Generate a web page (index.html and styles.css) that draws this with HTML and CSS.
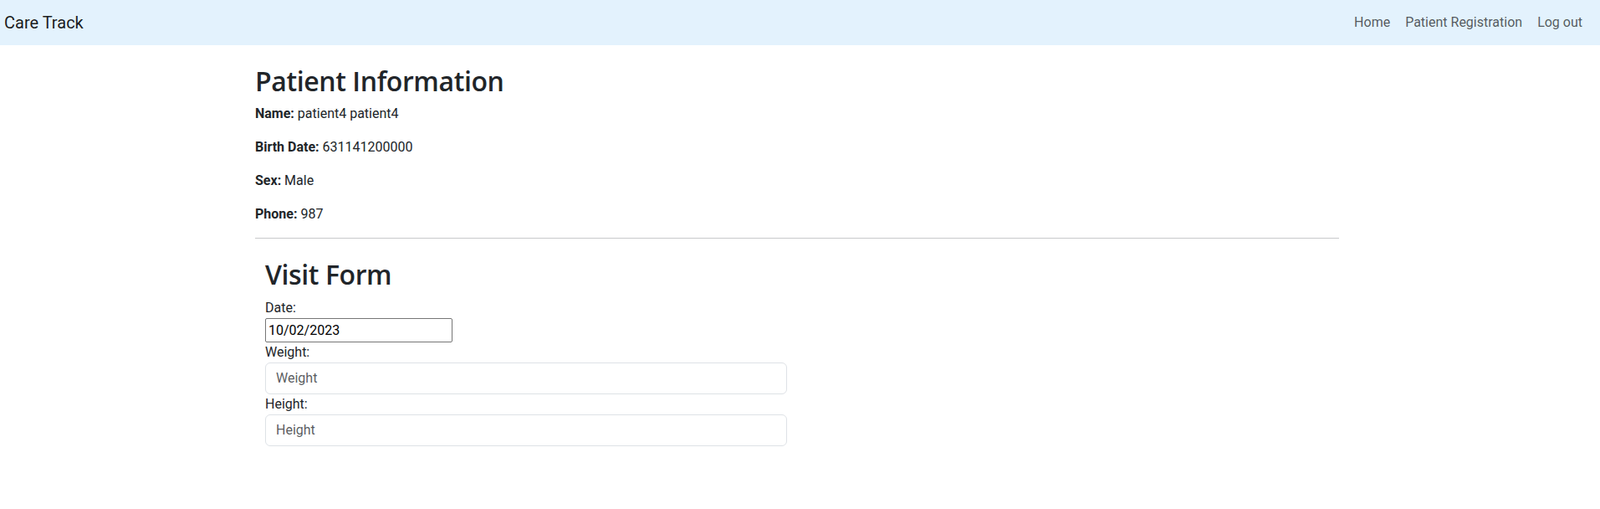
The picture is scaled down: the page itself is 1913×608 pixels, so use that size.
FILE: index.html
```html
<!DOCTYPE html>
<html lang="en">
<head>
<meta charset="utf-8">
<title>Care Track</title>
<link rel="stylesheet" href="styles.css">
</head>
<body>
<nav class="navbar">
  <a class="brand" href="#">Care Track</a>
  <div class="nav-links">
    <a class="nav-link" href="#">Home</a>
    <a class="nav-link" href="#">Patient Registration</a>
    <a class="nav-link" href="#">Log out</a>
  </div>
</nav>
<main class="container">
  <h2 class="heading">Patient Information</h2>
  <p class="info"><strong>Name:</strong> patient4 patient4</p>
  <p class="info"><strong>Birth Date:</strong> 631141200000</p>
  <p class="info"><strong>Sex:</strong> Male</p>
  <p class="info"><strong>Phone:</strong> 987</p>
  <hr class="divider">
  <section class="visit">
    <h2 class="heading">Visit Form</h2>
    <form class="visit-form">
      <label class="field-label" for="date">Date:</label>
      <input class="date-input" id="date" type="text" value="10/02/2023">
      <label class="field-label" for="weight">Weight:</label>
      <input class="form-control" id="weight" type="text" placeholder="Weight">
      <label class="field-label" for="height">Height:</label>
      <input class="form-control" id="height" type="text" placeholder="Height">
    </form>
  </section>
</main>
</body>
</html>
```
FILE: styles.css
```css
* { box-sizing: border-box; }

body {
  margin: 0;
  font-family: Roboto, "Noto Sans", sans-serif;
  font-size: 16px;
  line-height: 1.5;
  color: #212529;
  background: #fff;
}

.navbar {
  height: 54px;
  display: flex;
  align-items: center;
  justify-content: space-between;
  padding: 0 12px 0 5px;
  background: #e3f2fd;
}

.brand {
  font-size: 20px;
  line-height: 30px;
  color: rgba(0, 0, 0, 0.9);
  text-decoration: none;
}

.nav-links {
  display: flex;
}

.nav-link {
  padding: 0 9px;
  line-height: 24px;
  color: rgba(0, 0, 0, 0.65);
  text-decoration: none;
}

.container {
  width: 1296px;
  margin: 24px 0 0 305px;
}

.heading {
  margin: 0 0 8px;
  font-family: "Open Sans", Roboto, sans-serif;
  font-weight: 600;
  font-size: 32px;
  line-height: 1.2;
  letter-spacing: -0.4px;
  color: #212529;
}

.info {
  margin: 0 0 16px;
}

.info strong {
  font-weight: 700;
}

.divider {
  margin: 16px 0;
  border: 0;
  border-top: 1px solid #c8c9ca;
  height: 0;
}

.visit {
  padding: 8px 12px 0;
}

.visit-form {
  width: 624px;
}

.field-label {
  display: block;
  line-height: 24px;
}

.date-input {
  display: block;
  width: 224px;
  height: 29px;
  padding: 0 3px;
  border: 1px solid #767676;
  border-radius: 2px;
  font: 16px Roboto, sans-serif;
  color: #000;
  background: #fff;
}

.form-control {
  display: block;
  width: 100%;
  height: 38px;
  padding: 6px 12px;
  border: 1px solid #dee2e6;
  border-radius: 6px;
  font: 16px/1.5 Roboto, sans-serif;
  color: #212529;
  background: #fff;
}

.form-control::placeholder {
  color: rgba(33, 37, 41, 0.75);
}
```
